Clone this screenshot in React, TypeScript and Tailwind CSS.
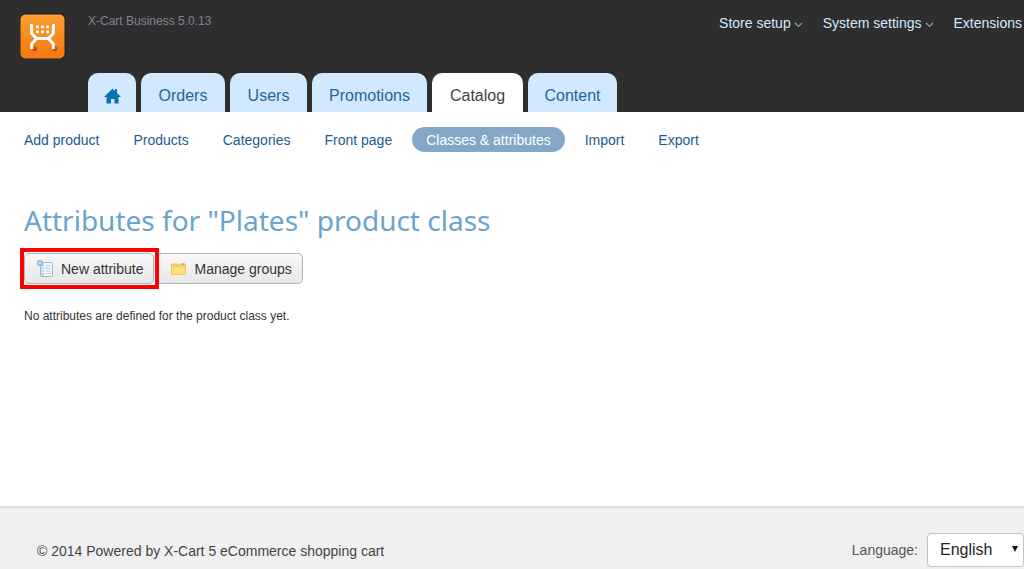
const topMenu = [
  { label: "Store setup", arrow: true },
  { label: "System settings", arrow: true },
  { label: "Extensions", arrow: false },
];

const tabs = [
  { label: "Orders", width: "w-[84px]" },
  { label: "Users", width: "w-[77px]" },
  { label: "Promotions", width: "w-[115px]" },
  { label: "Catalog", width: "w-[91px]", active: true },
  { label: "Content", width: "w-[89px]" },
];

const sections = [
  "Add product",
  "Products",
  "Categories",
  "Front page",
  "Classes & attributes",
  "Import",
  "Export",
];

function Logo() {
  return (
    <svg viewBox="0 0 46 46" className="size-[46px] shrink-0" aria-hidden="true">
      <defs>
        <linearGradient id="logo-fill" x1="0" y1="0" x2="0" y2="1">
          <stop offset="0" stopColor="#fb9f30" />
          <stop offset="1" stopColor="#f47712" />
        </linearGradient>
      </defs>
      <rect x="0" y="0" width="46" height="46" rx="6" fill="#1f2326" />
      <rect x="0.5" y="1.5" width="44" height="44" rx="5" fill="url(#logo-fill)" />
      <circle cx="14.5" cy="36" r="2.4" fill="#b6500b" />
      <circle cx="35" cy="36" r="2.4" fill="#b6500b" />
      <path
        d="M10 12.500H11.700V20.500L16.500 25.500H28.500L33.300 20.500V12.500H35M11.700 36V31L16.500 25.500M33.300 36V31L28.500 25.500"
        fill="none"
        stroke="#fff"
        strokeWidth="3"
        strokeLinejoin="round"
      />
      <path
        d="M16 12.500h2.800v2.800h-2.800zM21.100 12.500h2.800v2.800h-2.800zM26.200 12.500h2.800v2.800h-2.800zM16 17.400h2.800v2.800h-2.800zM21.100 17.400h2.800v2.800h-2.800zM26.200 17.400h2.800v2.800h-2.800z"
        fill="#fff"
      />
    </svg>
  );
}

function HomeIcon() {
  return (
    <svg viewBox="0 0 17 16" className="h-4 w-[17px]" fill="#0a70b0" aria-hidden="true">
      <path d="M8.500 0.500 11 3V1h2v4L17 9h-2.500v6.500H10.500V11H7v4.500H2.500V9H0z" />
    </svg>
  );
}

function ListIcon() {
  return (
    <svg viewBox="0 0 16 18" className="h-[18px] w-4" aria-hidden="true">
      <rect x="3.500" y="2.500" width="12" height="14" rx="1" fill="#f3f9fd" stroke="#9ab8cf" />
      <path d="M4 3h3v13H4z" fill="#c6daea" />
      <path d="M8.500 6h5M8.500 8.500h5M8.500 11h5M8.500 13.500h5" stroke="#a9cde6" />
      <path d="M4 6.500h3M4 9.500h3M4 12.500h3" stroke="#e3eff7" />
      <rect x="1" y="1" width="4" height="4" fill="#dbe9f4" stroke="#7599ba" />
    </svg>
  );
}

function FolderIcon() {
  return (
    <svg viewBox="0 0 15 12" className="h-3 w-[15px]" aria-hidden="true">
      <path d="M.5 3V1H6.500L7.500 2H9L10 .5H13.500L14.500 1.500V11.500H.5z" fill="#fbd56c" stroke="#efbf4e" />
      <path d="M10.500 1.500h3" stroke="#7fb8a0" />
      <path d="M.5 3.500h14v8H.5z" fill="#fddd7c" stroke="#f4c75c" />
    </svg>
  );
}

const buttonStyle =
  "flex h-[31px] items-center gap-2 rounded-[5px] border border-[#b5b5b5] bg-linear-to-b from-[#f8f8f8] to-[#e8e8e8] pr-[10px] pl-3 text-sm text-[#333]";

export default function App() {
  return (
    <div className="flex min-h-screen flex-col bg-white font-['Liberation_Sans',Arial,sans-serif] text-sm">
      <header className="flex flex-col bg-[#2e2e2e]">
        <div className="flex h-[73px] items-start justify-between pl-5">
          <div className="flex items-start gap-[22px] pt-[13px]">
            <a href="#home" aria-label="X-Cart">
              <Logo />
            </a>
            <span className="text-xs leading-4 text-[#7d8594]">X-Cart Business 5.0.13</span>
          </div>
          <nav aria-label="Settings" className="flex gap-5 pt-[13px] pr-[2px]">
            {topMenu.map((item) => (
              <a
                key={item.label}
                href="#settings"
                className="flex items-center gap-[3px] leading-5 text-[#d1e8ff]"
              >
                {item.label}
                {item.arrow && (
                  <svg viewBox="0 0 9 6" className="mt-[3px] h-1.5 w-[9px]" aria-hidden="true">
                    <path d="M1 1l3.500 3.500L8 1" fill="none" stroke="#93a2b0" strokeWidth="1.2" />
                  </svg>
                )}
              </a>
            ))}
          </nav>
        </div>
        <nav aria-label="Main" className="flex gap-[5px] pl-[88px]">
          <a
            href="#home"
            aria-label="Home"
            className="flex h-[39px] w-12 items-center justify-center rounded-t-[10px] bg-[#d1e8ff] pt-[6px]"
          >
            <HomeIcon />
          </a>
          {tabs.map((tab) => (
            <a
              key={tab.label}
              href="#tab"
              className={`flex h-[39px] items-center justify-center rounded-t-[10px] pt-[6px] text-base ${tab.width} ${
                tab.active ? "bg-white text-[#444]" : "bg-[#d1e8ff] text-[#266499]"
              }`}
            >
              {tab.label}
            </a>
          ))}
        </nav>
      </header>

      <nav aria-label="Catalog" className="flex gap-1.5 px-[10px] pt-[15px]">
        {sections.map((section) => (
          <a
            key={section}
            href="#section"
            className={`flex h-[25px] items-center rounded-full px-[14px] whitespace-nowrap ${
              section === "Classes & attributes" ? "bg-[#84a7c8] text-white" : "text-[#235b90]"
            }`}
          >
            {section}
          </a>
        ))}
      </nav>

      <main className="flex-1 px-6 pt-12">
        <h1 className="font-['Trebuchet_MS','Noto_Sans',sans-serif] text-[28px] leading-10 text-[#69a4cc]">
          Attributes for "Plates" product class
        </h1>
        <div className="mt-2 -ml-1 flex items-center">
          <div className="border-4 border-[#fe0000] py-px pr-px">
            <button type="button" className={buttonStyle}>
              <ListIcon />
              New attribute
            </button>
          </div>
          <button type="button" className={`${buttonStyle} rounded-l-none border-l-0`}>
            <FolderIcon />
            Manage groups
          </button>
        </div>
        <p className="mt-[19px] text-xs leading-4 text-[#333]">
          No attributes are defined for the product class yet.
        </p>
      </main>

      <footer className="flex h-[63px] items-start justify-between border-t-2 border-[#dddddd] bg-[#f0f0f0] pt-[25px] pl-[37px]">
        <p className="pt-2 leading-5 text-[#444]">© 2014 Powered by X-Cart 5 eCommerce shopping cart</p>
        <div className="flex items-center gap-[9px]">
          <label htmlFor="language" className="text-[#555]">
            Language:
          </label>
          <div className="relative">
            <select
              id="language"
              className="h-[34px] w-[97px] appearance-none rounded border border-[#c4c4c4] bg-white pl-3 text-base text-[#222]"
            >
              <option>English</option>
            </select>
            <svg
              viewBox="0 0 6 6"
              className="pointer-events-none absolute top-[13px] right-[6px] size-1.5"
              aria-hidden="true"
            >
              <path d="M0 0h6L3 6z" fill="#111" />
            </svg>
          </div>
        </div>
      </footer>
    </div>
  );
}
